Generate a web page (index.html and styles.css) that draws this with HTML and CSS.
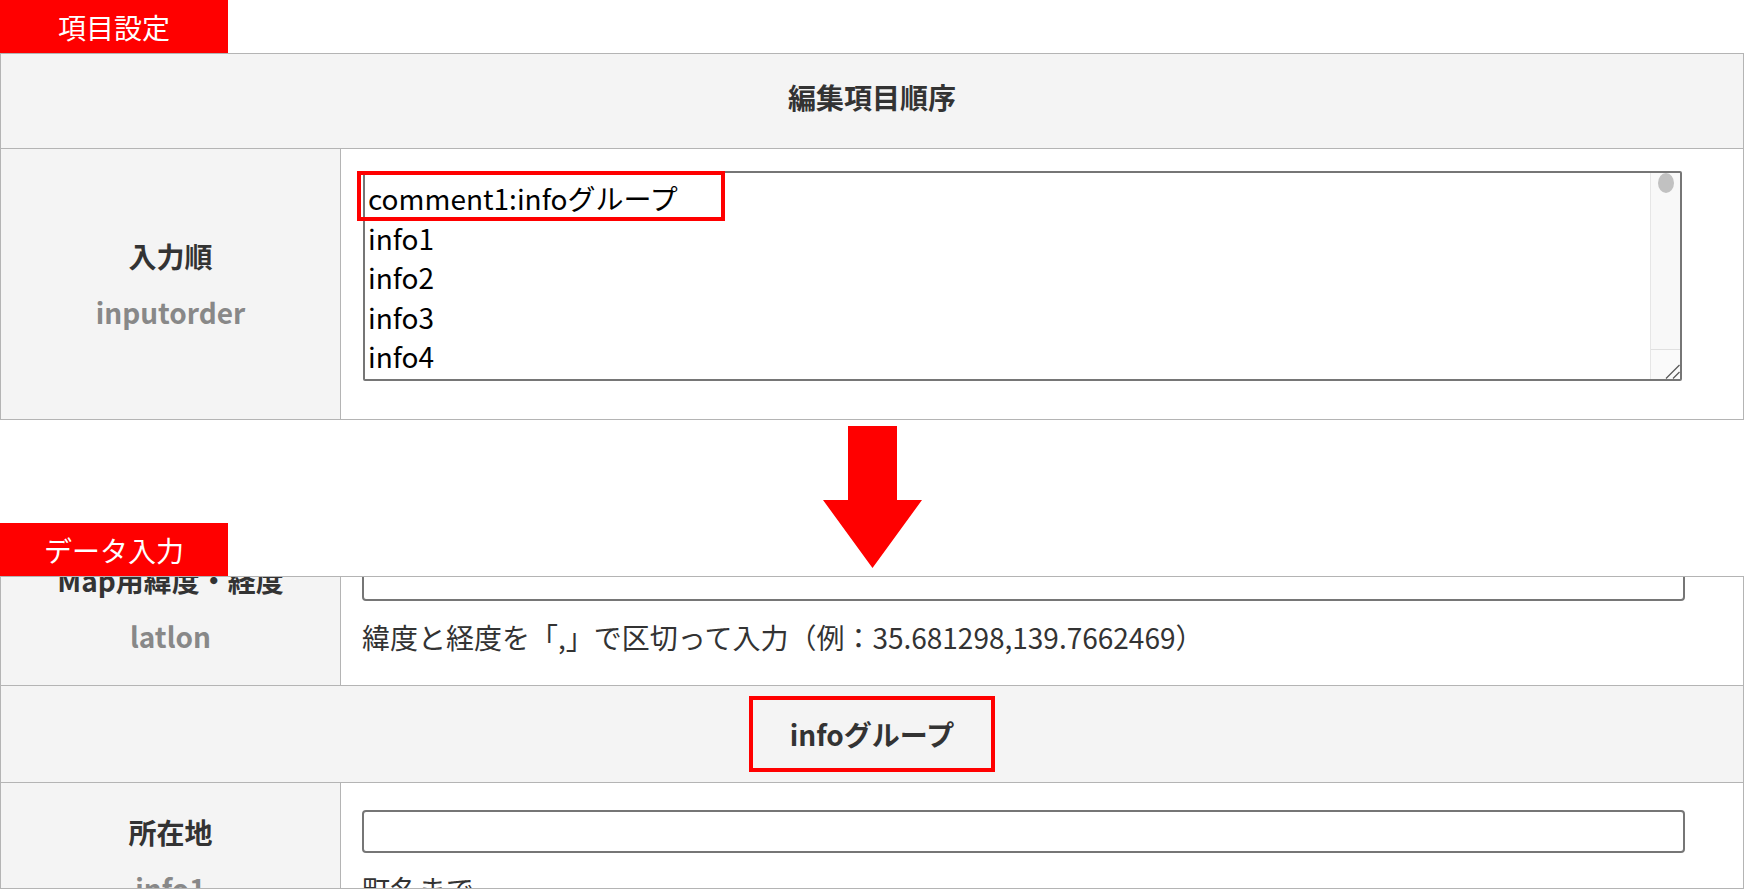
FILE: index.html
```html
<!DOCTYPE html>
<html lang="ja">
<head>
    <meta charset="UTF-8">
    <meta name="viewport" content="width=device-width, initial-scale=1.0">
    <title>項目設定とデータ入力</title>
    <link rel="stylesheet" href="styles.css">
</head>
<body>
    <div class="tag">項目設定</div>
    <table class="form">
        <colgroup><col class="col-label"><col></colgroup>
        <tr>
            <th class="head" colspan="2">編集項目順序</th>
        </tr>
        <tr>
            <th class="label"><span class="ja">入力順</span><span class="key">inputorder</span></th>
            <td class="field field--order">
                <div class="editor">
                    <textarea class="order" wrap="off" spellcheck="false">comment1:infoグループ
info1
info2
info3
info4
info5
info6
info7
info8
info9
info10
comment2:accessグループ
access1
access2
access3
access4
access5
comment3:roomグループ
room1
room2
room3
room4
room5
room6
room7
comment4:photoグループ
photo1
photo2
photo3
photo4
photo5
photo6
latlon
memo1
memo2
memo3
memo4
memo5
memo6</textarea>
                    <div class="scroll">
                        <div class="thumb"></div>
                        <div class="corner">
                            <svg width="29" height="29" viewBox="0 0 29 29">
                                <path d="M15 28.5 L28.5 15 M22 28.5 L28.5 22" stroke="#5a5a5a" stroke-width="1.3" fill="none"/>
                            </svg>
                        </div>
                    </div>
                    <div class="mark"></div>
                </div>
            </td>
        </tr>
    </table>

    <div class="between">
        <div class="tag">データ入力</div>
        <svg class="arrow" width="99" height="142" viewBox="0 0 99 142">
            <polygon points="25,0 74,0 74,74 99,74 49.5,142 0,74 25,74" fill="#ff0000"/>
        </svg>
    </div>

    <div class="shot">
        <table class="form">
            <colgroup><col class="col-label"><col></colgroup>
            <tr>
                <th class="label"><span class="ja">Map用緯度・経度</span><span class="key">latlon</span></th>
                <td class="field">
                    <input class="text" type="text">
                    <div class="hint">緯度と経度を「,」で区切って入力（例：35.681298,139.7662469）</div>
                </td>
            </tr>
            <tr>
                <th class="head head--group" colspan="2"><span class="boxed">infoグループ</span></th>
            </tr>
            <tr>
                <th class="label"><span class="ja">所在地</span><span class="key">info1</span></th>
                <td class="field">
                    <input class="text" type="text">
                    <div class="hint">町名まで</div>
                </td>
            </tr>
        </table>
    </div>
</body>
</html>
```

FILE: styles.css
```css
* {
    box-sizing: border-box;
}
html, body {
    margin: 0;
}
body {
    font-family: "Noto Sans CJK JP", "Noto Sans", sans-serif;
    font-size: 28px;
    color: #333;
    background: #fff;
    overflow: hidden;
}
.tag {
    width: 228px;
    height: 53px;
    background: #ff0000;
    color: #fff;
    display: flex;
    align-items: center;
    justify-content: center;
    line-height: 1;
}
.form {
    width: 100%;
    border-collapse: collapse;
    table-layout: fixed;
}
.form th, .form td {
    border: 1px solid #b4b4b4;
    padding: 0;
}
.col-label {
    width: 340px;
}
.head {
    height: 95px;
    background: #f4f4f4;
    font-weight: bold;
    text-align: center;
    vertical-align: middle;
    line-height: 42px;
    padding-bottom: 8px !important;
}
.head--group {
    height: 97px;
    padding-bottom: 0 !important;
}
.boxed {
    display: inline-block;
    border: 4px solid #ff0000;
    padding: 13px 37px;
    line-height: 42px;
}
.label {
    background: #f4f4f4;
    text-align: center;
    vertical-align: middle;
    font-weight: bold;
    line-height: 56px;
}
.label .ja, .label .key {
    display: block;
}
.label .key {
    color: #888;
}
.field {
    padding: 27px 58px 27px 21px !important;
    vertical-align: top;
    background: #fff;
}
.field--order {
    padding: 22px 61px 38px 22px !important;
}
.editor {
    position: relative;
}
.order {
    display: block;
    width: 100%;
    height: 210px;
    margin: 0;
    border: 2px solid #767676;
    border-radius: 2px;
    padding: 6px 34px 6px 3px;
    font-family: inherit;
    font-size: 28px;
    line-height: 39.5px;
    color: #000;
    overflow: hidden;
    scrollbar-width: none;
    resize: none;
}

/* drawn scrollbar + resize corner */
.scroll {
    position: absolute;
    top: 2px;
    right: 2px;
    bottom: 2px;
    width: 30px;
    display: flex;
    flex-direction: column;
    justify-content: space-between;
    background: #f8f8f8;
    border-left: 1px solid #e6e6e6;
}
.thumb {
    width: 16px;
    height: 20px;
    margin-left: 7px;
    border-radius: 8px / 10px;
    background: #c1c1c1;
}
.corner {
    height: 30px;
    border-top: 1px solid #e0e0e0;
    background: #fafafa;
}
.corner svg {
    display: block;
}
.mark {
    position: absolute;
    top: 0;
    left: -6px;
    width: 368px;
    height: 50px;
    border: 4px solid #ff0000;
    pointer-events: none;
}
.text {
    display: block;
    width: 100%;
    height: 43px;
    margin: 0;
    border: 2px solid #767676;
    border-radius: 4px;
    font: inherit;
    background: #fff;
}
.hint {
    margin-top: 15px;
    line-height: 42px;
}
.between {
    display: grid;
    grid-template-columns: 1fr auto 1fr;
    height: 156px;
}
.between .tag {
    align-self: end;
}
.arrow {
    display: block;
    margin-top: 6px;
}
.shot {
    height: 313px;
    overflow: hidden;
    border-top: 1px solid #b4b4b4;
    border-bottom: 1px solid #b4b4b4;
}
.shot .form {
    margin-top: -47px;
}
```
